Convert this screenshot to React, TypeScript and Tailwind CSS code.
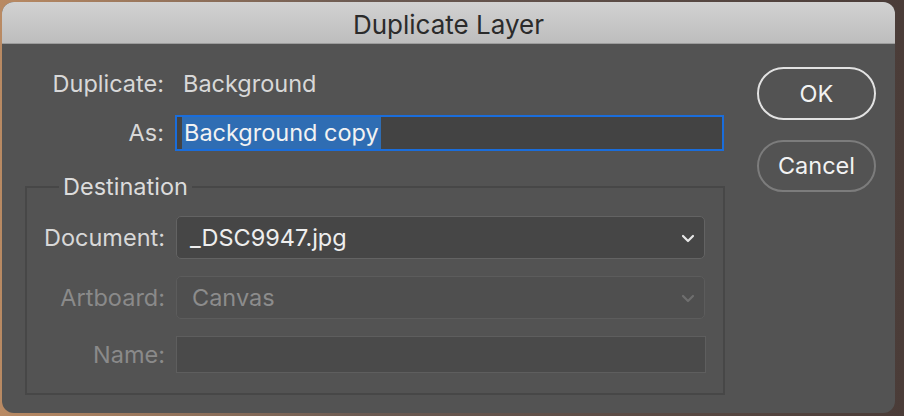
import React from "react";

function Chevron({ dim }: { dim?: boolean }) {
  return (
    <svg width="16" height="16" viewBox="0 0 16 16" className={dim ? "text-[#6e6e6e]" : "text-[#e8e8e8]"}>
      <path d="M3 6 L8 11 L13 6" fill="none" stroke="currentColor" strokeWidth="2.2" strokeLinecap="round" strokeLinejoin="round" />
    </svg>
  );
}

function Row({ label, dim, w = 150, children }: { label: string; dim?: boolean; w?: number; children: React.ReactNode }) {
  return (
    <div className="flex items-center">
      <div
        className={`pr-[11px] text-right shrink-0 whitespace-nowrap ${dim ? "text-[#8a8a8a]" : "text-[#d8d8d8]"} ${w === 150 ? "w-[150px]" : "w-[149px]"}`}
      >
        {label}
      </div>
      {children}
    </div>
  );
}

export default function App() {
  return (
    <div
      className="w-[904px] h-[416px] overflow-hidden bg-[linear-gradient(90deg,#b98a63_0%,#6b5a52_40%,#4a3c38_100%)] p-[2px] pr-[9px]"
      style={{ fontFamily: "Inter, 'Noto Sans', sans-serif" }}
    >
      <div className="h-[411px] rounded-[12px] overflow-hidden bg-[#535353] flex flex-col">
        {/* title bar */}
        <div className="h-[42px] shrink-0 bg-[linear-gradient(180deg,#d2d2d2,#bdbdbd)] border-b border-[#9c9c9c] flex items-center justify-center pt-[5px] text-[#2b2b2b] text-[26px] leading-[30px]">
          Duplicate Layer
        </div>

        <div className="flex flex-1 text-[23.5px] leading-[24px]">
          {/* left column */}
          <div className="w-[723px] pl-[23px] pt-[28px] flex flex-col">
            <Row label="Duplicate:">
              <span className="text-[#d8d8d8] pl-[8px]">Background</span>
            </Row>

            <div className="mt-[19px]">
              <Row label="As:">
                <div className="w-[549px] h-[36px] border-2 border-[#1a6ddb] bg-[#434343] flex items-center pl-[5px]">
                  <span className="bg-[#2f6db3] text-[#f2f2f2] h-[32px] leading-[32px] px-[2px]">Background copy</span>
                </div>
              </Row>
            </div>

            <fieldset className="mt-[24px] w-[700px] border-2 border-[#474747] pb-[20px] pt-[17px] flex flex-col gap-[17px]">
              <legend className="ml-[32px] px-[4px] text-[#dcdcdc] leading-[24px]">Destination</legend>
              <Row label="Document:" w={149}>
                <div className="w-[529px] h-[43px] rounded-[5px] border-[1.5px] border-[#636363] bg-[#464646] flex items-center justify-between pl-[13px] pr-[8px] text-[#eeeeee]">
                  <span>_DSC9947.jpg</span>
                  <Chevron />
                </div>
              </Row>
              <Row label="Artboard:" dim w={149}>
                <div className="w-[529px] h-[43px] rounded-[5px] border-[1.5px] border-[#5c5c5c] bg-[#4f4f4f] flex items-center justify-between pl-[15px] pr-[8px] text-[#8c8c8c]">
                  <span>Canvas</span>
                  <Chevron dim />
                </div>
              </Row>
              <Row label="Name:" dim w={149}>
                <div className="w-[530px] h-[37px] border-[1.5px] border-[#5e5e5e] bg-[#4a4a4a]" />
              </Row>
            </fieldset>
          </div>

          {/* buttons */}
          <div className="pl-[32px] pt-[23px] flex flex-col gap-[20px]">
            <button className="w-[119px] h-[53px] rounded-full border-2 border-[#e2e2e2] text-[#f2f2f2]">OK</button>
            <button className="w-[119px] h-[52px] rounded-full border-2 border-[#7c7c7c] text-[#f2f2f2]">Cancel</button>
          </div>
        </div>
      </div>
    </div>
  );
}
